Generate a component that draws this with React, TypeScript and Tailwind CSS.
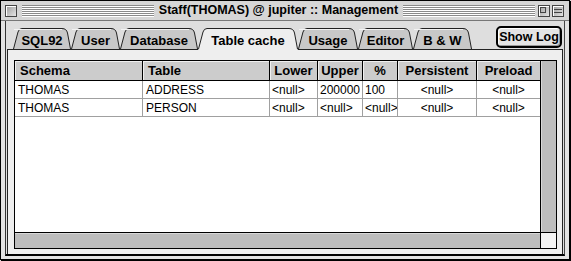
import type { ReactNode } from "react";

const TABS = [
  { label: "SQL92", width: 58 },
  { label: "User", width: 49 },
  { label: "Database", width: 78 },
  { label: "Table cache", width: 100, selected: true },
  { label: "Usage", width: 60 },
  { label: "Editor", width: 55 },
  { label: "B & W", width: 59 },
];

const COLUMNS = [
  { label: "Schema", width: 128, align: "left" },
  { label: "Table", width: 127, align: "left" },
  { label: "Lower", width: 48, align: "center" },
  { label: "Upper", width: 45, align: "center" },
  { label: "%", width: 35, align: "center" },
  { label: "Persistent", width: 79, align: "center" },
  { label: "Preload", width: 63, align: "center" },
];

const ROWS = [
  ["THOMAS", "ADDRESS", "<null>", "200000", "100", "<null>", "<null>"],
  ["THOMAS", "PERSON", "<null>", "<null>", "<null>", "<null>", "<null>"],
];

// data cells: last two columns are centered, others hug the left edge
const CELL_ALIGN = ["left", "left", "left", "left", "left", "center", "center"];

function Stripes() {
  return (
    <div className="h-[12px] flex-1 bg-[repeating-linear-gradient(to_bottom,#8a8a8a_0px,#8a8a8a_1px,#ffffff_1px,#ffffff_2px)]" />
  );
}

function TitleBox({ children }: { children?: ReactNode }) {
  return (
    <div className="relative h-[12px] w-[12px] border border-[#444] bg-[linear-gradient(135deg,#9a9a9a,#e6e6e6)] shadow-[inset_1px_1px_0_#fff]">
      {children}
    </div>
  );
}

function TitleBar() {
  return (
    <div className="flex h-[20px] items-center border-b border-[#777] bg-[#d6d6d6] pl-[4px] pr-[5px]">
      <TitleBox />
      <div className="ml-[5px] flex flex-1 items-center">
        <Stripes />
        <span className="px-[5px] text-[12.5px] font-bold leading-none text-black">
          Staff(THOMAS) @ jupiter :: Management
        </span>
        <Stripes />
      </div>
      <div className="ml-[3px] flex gap-[2px]">
        <TitleBox>
          <div className="absolute left-[1px] top-[1px] h-[6px] w-[6px] border border-[#444]" />
        </TitleBox>
        <TitleBox>
          <div className="absolute left-[1px] top-[3px] h-[4px] w-[8px] border-y border-[#444]" />
        </TitleBox>
      </div>
    </div>
  );
}

function Tab({ label, width, selected }: { label: string; width: number; selected?: boolean }) {
  const h = 21;
  const d = `M0.5,${h} L5,4 Q6,0.5 9,0.5 L${width - 9},0.5 Q${width - 4.5},0.5 ${width - 3.5},5 L${width - 0.5},${h}`;
  return (
    <div
      className={`relative flex h-[21px] items-center justify-center ${selected ? "z-10 -mb-px h-[22px]" : ""}`}
      style={{ width }}
    >
      <svg className="absolute left-0 top-0" width={width} height={h + 1} viewBox={`0 0 ${width} ${h + 1}`}>
        <path d={d + (selected ? ` L${width},${h + 1} L0,${h + 1} Z` : " Z")} fill={selected ? "#eeeeee" : "#c8c8c8"} />
        <path d={d} fill="none" stroke="#222" strokeWidth="1" />
        {!selected && <path d={`M1,1.5 L${width - 9},1.5`} stroke="#f2f2f2" strokeWidth="1" />}
      </svg>
      <span className="relative pt-[3px] text-[13px] font-bold leading-none text-black">{label}</span>
    </div>
  );
}

function TableHeader() {
  return (
    <div className="flex h-[20px] border-b border-black bg-[#cccccc]">
      {COLUMNS.map((col, i) => (
        <div
          key={col.label}
          className={`flex items-center overflow-hidden whitespace-nowrap text-[13px] font-bold shadow-[inset_1px_1px_0_#f0f0f0] ${
            i < COLUMNS.length - 1 ? "border-r border-black" : ""
          } ${col.align === "left" ? "pl-[5px]" : "justify-center"}`}
          style={{ width: col.width }}
        >
          {col.label}
        </div>
      ))}
    </div>
  );
}

function TableRow({ cells }: { cells: string[] }) {
  return (
    <div className="flex h-[18px] border-b border-[#a0a0a0]">
      {cells.map((cell, i) => (
        <div
          key={i}
          className={`flex items-center overflow-hidden whitespace-nowrap text-[12px] ${
            i < cells.length - 1 ? "border-r border-[#a0a0a0]" : ""
          } ${CELL_ALIGN[i] === "center" ? "justify-center" : i < 2 ? "pl-[3px]" : "pl-[2px]"}`}
          style={{ width: COLUMNS[i].width }}
        >
          {cell}
        </div>
      ))}
    </div>
  );
}

export default function App() {
  return (
    <div className="h-[261px] w-[571px] bg-[#dddddd] font-['Liberation_Sans',Arial,sans-serif]">
      <div className="flex h-[260px] w-[570px] flex-col border border-black bg-[#e2e2e2] shadow-[1px_1px_0_#000]">
        <TitleBar />
        <div className="flex flex-1 flex-col pb-[3px] pl-[4px] pr-[4px]">
          <div className="flex flex-1 flex-col border-b-2 border-l border-r border-b-black border-l-[#333] border-r-[#444] bg-[#dedede]">
            <div className="flex items-end justify-between pl-[7px] pr-[2px] pt-[5px]">
              <div className="flex">
                {TABS.map((t) => (
                  <Tab key={t.label} {...t} />
                ))}
              </div>
              <button className="mb-[1px] h-[22px] w-[66px] rounded-[5px] border-2 border-black bg-[#e4e4e4] text-[12.5px] font-bold leading-none text-black shadow-[inset_1px_1px_0_#fff,inset_-1px_-1px_0_#999]">
                Show Log
              </button>
            </div>
            <div className="mx-[1px] flex flex-1 flex-col border-l border-r border-t border-[#222] bg-[#eeeeee] pb-[5px] pl-[6px] pr-[5px] pt-[10px]">
              <div className="flex flex-1 flex-col border border-black bg-white">
                <div className="flex min-h-0 flex-1">
                  <div className="flex flex-1 flex-col">
                    <TableHeader />
                    {ROWS.map((r, i) => (
                      <TableRow key={i} cells={r} />
                    ))}
                  </div>
                  <div className="w-[16px] border-l border-black bg-[#bdbdbd] shadow-[inset_1px_0_0_#d8d8d8]" />
                </div>
                <div className="flex h-[16px] border-t border-black">
                  <div className="flex-1 bg-[#bdbdbd] shadow-[inset_0_1px_0_#d8d8d8]" />
                  <div className="w-[16px] border-l border-black bg-[#f4f4f4]" />
                </div>
              </div>
            </div>
          </div>
        </div>
      </div>
    </div>
  );
}
